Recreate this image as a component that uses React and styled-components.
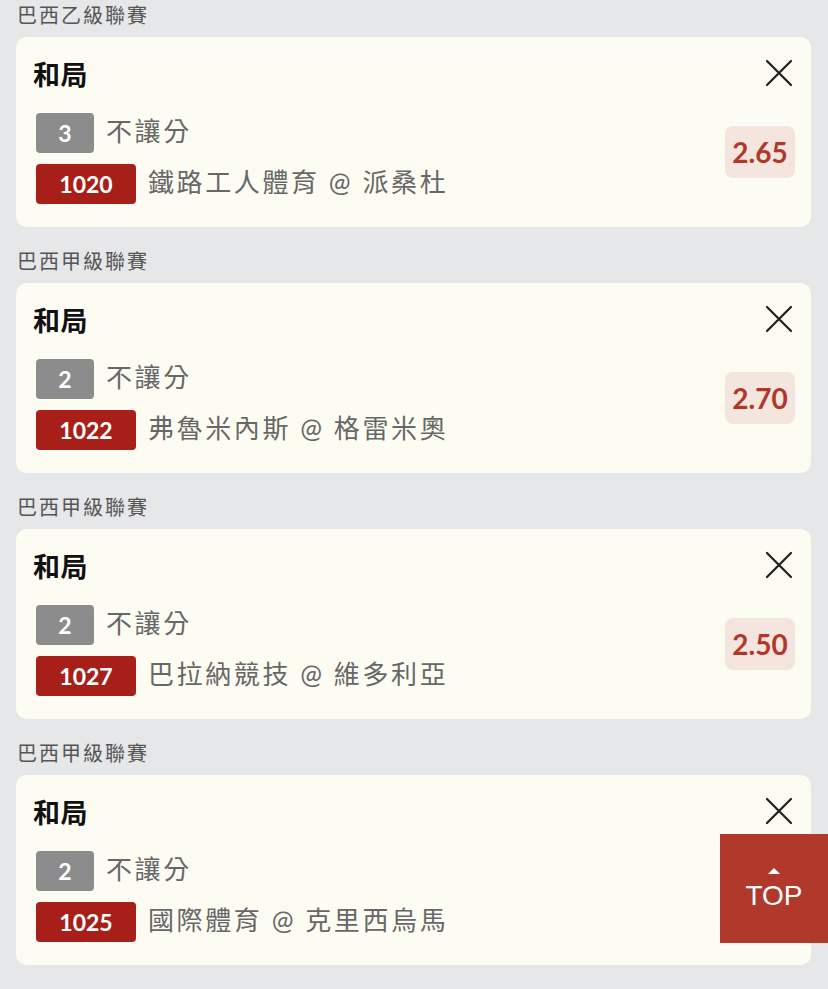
import React from "react"
import styled, {createGlobalStyle} from 'styled-components';

const bets = [
    {league: '巴西乙級聯賽', handicap: '3', code: '1020', match: '鐵路工人體育 @ 派桑杜', odds: '2.65'},
    {league: '巴西甲級聯賽', handicap: '2', code: '1022', match: '弗魯米內斯 @ 格雷米奧', odds: '2.70'},
    {league: '巴西甲級聯賽', handicap: '2', code: '1027', match: '巴拉納競技 @ 維多利亞', odds: '2.50'},
    {league: '巴西甲級聯賽', handicap: '2', code: '1025', match: '國際體育 @ 克里西烏馬', odds: '3.10'},
]

const CloseIcon = () => (
    <svg width="28" height="28" viewBox="0 0 28 28">
        <path d="M2 2 L26 26 M26 2 L2 26" stroke="#1f1f1f" strokeWidth="2.2" strokeLinecap="round" fill="none"/>
    </svg>
)

const App = () => {
    return (
        <Page>
            <GlobalStyle/>
            {bets.map((bet, index) => (
                <Section key={index}>
                    <League>{bet.league}</League>
                    <Card>
                        <Header>
                            <Title>和局</Title>
                            <CloseButton><CloseIcon/></CloseButton>
                        </Header>
                        <Body>
                            <Rows>
                                <Row>
                                    <Badge $width={58} $bg="#8c8c8c">{bet.handicap}</Badge>
                                    <RowText>不讓分</RowText>
                                </Row>
                                <Row>
                                    <Badge $width={100} $bg="#a81f19">{bet.code}</Badge>
                                    <RowText>{bet.match}</RowText>
                                </Row>
                            </Rows>
                            <Odds>{bet.odds}</Odds>
                        </Body>
                    </Card>
                </Section>
            ))}
            <TopButton>
                <Arrow/>
                TOP
            </TopButton>
        </Page>
    )
}

const GlobalStyle = createGlobalStyle`
  body {
    margin: 0;
    background: #e6e7e9;
    font-family: Lato, "Noto Sans CJK TC", sans-serif;
  }
`
const Page = styled.div`
  padding: 1px 17px 40px 16px;
  min-height: 989px;
  box-sizing: border-box;
`
const Section = styled.div`
  display: flex;
  flex-direction: column;
  margin-bottom: 20px;
`
const League = styled.div`
  font-size: 20px;
  line-height: 24px;
  letter-spacing: 2px;
  color: #555;
  padding: 2px 0 0 1px;
  margin-bottom: 10px;
`
const Card = styled.div`
  background: #fdfcf3;
  border-radius: 10px;
  height: 190px;
  box-sizing: border-box;
  padding: 18px 0 23px 0;
  box-shadow: 0 0 1px rgba(0, 0, 0, 0.06);
`
const Header = styled.div`
  display: flex;
  align-items: center;
  justify-content: space-between;
  padding: 0 18px 0 17px;
  height: 36px;
`
const Title = styled.div`
  font-size: 27px;
  font-weight: 700;
  letter-spacing: 0.5px;
  color: #111;
`
const CloseButton = styled.div`
  display: flex;
  width: 28px;
  height: 28px;
`
const Body = styled.div`
  display: flex;
  align-items: center;
  justify-content: space-between;
  padding: 0 16px 0 20px;
  margin-top: 22px;
`
const Rows = styled.div`
  display: flex;
  flex-direction: column;
  gap: 11px;
`
const Row = styled.div`
  display: flex;
  align-items: center;
  gap: 12px;
`
const Badge = styled.div`
  width: ${p => p.$width}px;
  height: 40px;
  border-radius: 4px;
  background: ${p => p.$bg};
  color: #fff;
  font-family: Lato, sans-serif;
  font-weight: 700;
  font-size: 23px;
  display: flex;
  align-items: center;
  justify-content: center;
`
const RowText = styled.div`
  font-size: 26px;
  line-height: 1.2;
  letter-spacing: 2.6px;
  color: #676767;
  padding-bottom: 3px;
`
const Odds = styled.div`
  width: 70px;
  height: 52px;
  border-radius: 8px;
  background: #f4e5df;
  color: #b0382b;
  font-family: Lato, sans-serif;
  font-weight: 700;
  font-size: 28px;
  display: flex;
  align-items: center;
  justify-content: center;
  margin-bottom: 14px;
`
const TopButton = styled.div`
  position: fixed;
  right: 0;
  bottom: 46px;
  width: 108px;
  height: 109px;
  background: #b0392b;
  color: #fff;
  font-family: "Liberation Sans", Arial, sans-serif;
  font-size: 28px;
  display: flex;
  flex-direction: column;
  align-items: center;
  justify-content: center;
  gap: 6px;
  padding-top: 2px;
  box-sizing: border-box;
`
const Arrow = styled.div`
  width: 0;
  height: 0;
  border-left: 6px solid transparent;
  border-right: 6px solid transparent;
  border-bottom: 6px solid #fff;
`
export default App;
